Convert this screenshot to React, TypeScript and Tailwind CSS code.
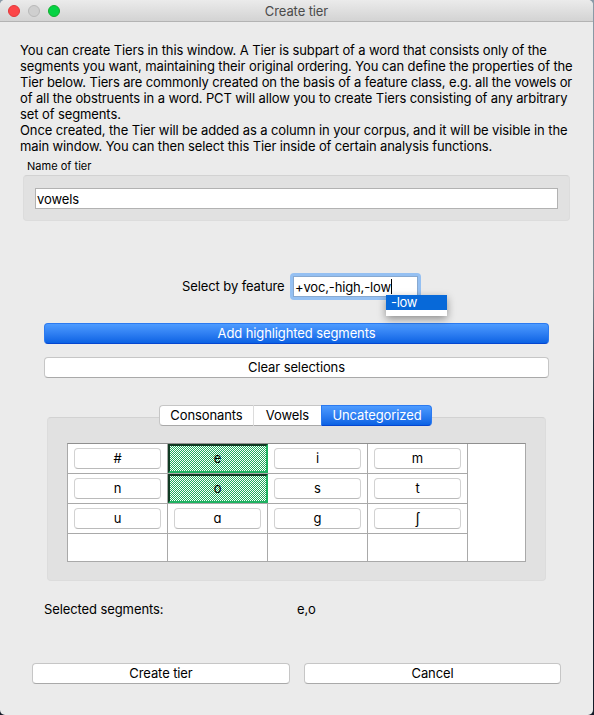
import type { ReactNode } from 'react';

const INTRO: { text: string; spacing: string }[] = [
  { text: 'You can create Tiers in this window. A Tier is subpart of a word that consists only of the', spacing: 'tracking-[-0.123px]' },
  { text: 'segments you want, maintaining their original ordering. You can define the properties of the', spacing: 'tracking-[-0.104px]' },
  { text: 'Tier below. Tiers are commonly created on the basis of a feature class, e.g. all the vowels or', spacing: 'tracking-[-0.133px]' },
  { text: 'of all the obstruents in a word. PCT will allow you to create Tiers consisting of any arbitrary', spacing: 'tracking-[-0.115px]' },
  { text: 'set of segments.', spacing: 'tracking-[-0.1px]' },
  { text: 'Once created, the Tier will be added as a column in your corpus, and it will be visible in the', spacing: 'tracking-[-0.106px]' },
  { text: 'main window. You can then select this Tier inside of certain analysis functions.', spacing: 'tracking-[-0.123px]' },
];

const SEGMENTS = [
  ['#', 'e', 'i', 'm'],
  ['n', 'o', 's', 't'],
  ['u', 'ɑ', 'ɡ', 'ʃ'],
];

const SELECTED = ['e', 'o'];

function PushButton({ children, className = '' }: { children: ReactNode; className?: string }) {
  return (
    <button
      className={`flex h-[21px] items-center justify-center rounded-[4px] border border-[#c6c6c6] border-b-[#a9a9a9] bg-white pb-[2px] ${className}`}
    >
      {children}
    </button>
  );
}

function SegmentCell({ label }: { label: string }) {
  if (SELECTED.includes(label)) {
    return (
      <td className="border-r border-b border-[#a9a9a9] p-0">
        <div className="relative -mr-px flex h-[29px] w-[100px] items-center justify-center border-2 border-t-[#0f3a22] border-r-[#1fb262] border-b-[#1fb262] border-l-[#0f3a22] bg-[repeating-conic-gradient(#20ab5f_0_25%,#ffffff_0_50%)] bg-[length:2px_2px] pr-px pb-px">
          {label}
        </div>
      </td>
    );
  }
  return (
    <td className="border-r border-b border-[#a9a9a9] p-0">
      <div className="flex h-[29px] justify-center pt-1">
        <PushButton className="w-[87px] border-[#d2d2d2] border-b-[#bababa]">
          {label === 'ʃ' ? <span className="font-['Noto_Sans',sans-serif] text-[14px]">{label}</span> : label}
        </PushButton>
      </div>
    </td>
  );
}

export default function App() {
  return (
    <div className="h-[715px] w-[594px] overflow-hidden bg-[linear-gradient(#8a9ba8,#7d8890_40%,#141c28_60%,#141c28)] font-['Inter','Noto_Sans',sans-serif] text-[13px] leading-4 tracking-[-0.1px] text-black">
      <div className="flex h-[715px] w-[593px] flex-col rounded-[5px] bg-[#ebebeb]">
        <header className="relative flex h-[22px] shrink-0 items-center justify-center rounded-t-[5px] border-b border-[#b3b3b3] bg-linear-to-b from-[#ebebeb] to-[#d3d3d3] text-[#4b4b4b]">
          <div className="absolute top-[5px] left-2 flex gap-2">
            <span className="size-3 rounded-full border border-[#e2383a] bg-[#fc4648]" />
            <span className="size-3 rounded-full border border-[#b9b9b9] bg-[#cfcfcf]" />
            <span className="size-3 rounded-full border border-[#12ad2e] bg-[#05d344]" />
          </div>
          <h1 className="pt-px">Create tier</h1>
        </header>

        <section className="mt-5 ml-5 h-[113px]">
          {INTRO.map((line) => (
            <p key={line.text} className={`whitespace-nowrap ${line.spacing}`}>{line.text}</p>
          ))}
        </section>

        <div className="ml-[27px] h-5 pt-[3px] text-[11px] tracking-[0.02px]">Name of tier</div>
        <div className="ml-[23px] h-[46px] w-[547px] rounded-[4px] border border-[#dcdcdc] border-t-[#d2d2d2] bg-[#e1e1e1] pt-3 pl-[11px]">
          <div className="flex h-[21px] w-[523px] items-center border border-[#b2b2b2] bg-white pt-px pl-px">vowels</div>
        </div>

        <div className="mt-[52px] ml-[182px] flex h-[27px]">
          <label className="w-[108px] pt-[5px] whitespace-nowrap">Select by feature</label>
          <div className="relative h-[27px] w-[131px] rounded-[4px] bg-[#95c0f2] p-[3px]">
            <div className="flex h-[21px] items-center border border-[#88a9d0] bg-white pl-px tracking-[-0.15px] whitespace-nowrap">
              <span>+voc,-high,-low</span>
              <span className="h-[15px] w-px bg-black" />
            </div>
            <div className="absolute top-[22px] left-24 h-[21px] w-[61px] bg-white shadow-[0_3px_8px_rgba(0,0,0,0.4)]">
              <div className="h-[15px] bg-[#0769d9] pl-[5px] leading-[15px] tracking-[-0.3px] text-white">-low</div>
            </div>
          </div>
        </div>

        <button className="mt-[23px] ml-11 flex h-[21px] w-[505px] shrink-0 items-center justify-center rounded-[4px] border border-[#2b7af0] border-b-[#0546d0] bg-linear-to-b from-[#4d9bff] to-[#0a62e4] pb-[2px] text-white">
          Add highlighted segments
        </button>
        <PushButton className="mt-[13px] ml-11 w-[505px] shrink-0">Clear selections</PushButton>

        <nav className="z-10 mt-[27px] ml-[159px] flex h-[21px] w-[273px] shrink-0">
          <button className="w-[95px] rounded-l-[4px] border border-[#c6c6c6] border-r-[#dcdcdc] border-b-[#a9a9a9] bg-white pb-[2px]">Consonants</button>
          <button className="w-[67px] border-y border-t-[#c6c6c6] border-b-[#a9a9a9] bg-white pb-[2px]">Vowels</button>
          <button className="w-[111px] rounded-r-[4px] border border-[#2b7af0] border-b-[#0546d0] bg-linear-to-b from-[#4d9bff] to-[#0a62e4] pb-[2px] pl-px text-white">Uncategorized</button>
        </nav>
        <section className="-mt-[9px] ml-[47px] h-[164px] w-[499px] shrink-0 rounded-[4px] border border-[#dcdcdc] border-t-[#d2d2d2] bg-[#e1e1e1] pt-[25px] pl-[19px]">
          <div className="h-[119px] w-[459px] border border-[#a9a9a9] border-t-[#8f8f8f] bg-white">
            <table className="w-[400px] table-fixed border-separate border-spacing-0 text-center">
              <tbody>
                {SEGMENTS.map((row) => (
                  <tr key={row[0]} className="h-[30px]">
                    {row.map((label) => (
                      <SegmentCell key={label} label={label} />
                    ))}
                  </tr>
                ))}
                <tr className="h-[27px]">
                  {[0, 1, 2, 3].map((col) => (
                    <td key={col} className="border-r border-[#a9a9a9] p-0" />
                  ))}
                </tr>
              </tbody>
            </table>
          </div>
        </section>

        <div className="mt-5 ml-11 flex h-4">
          <span className="w-[253px]">Selected segments:</span>
          <span>e,o</span>
        </div>

        <footer className="mt-[46px] ml-8 flex gap-[14px]">
          <PushButton className="w-[258px]">Create tier</PushButton>
          <PushButton className="w-[257px]">Cancel</PushButton>
        </footer>
      </div>
    </div>
  );
}
